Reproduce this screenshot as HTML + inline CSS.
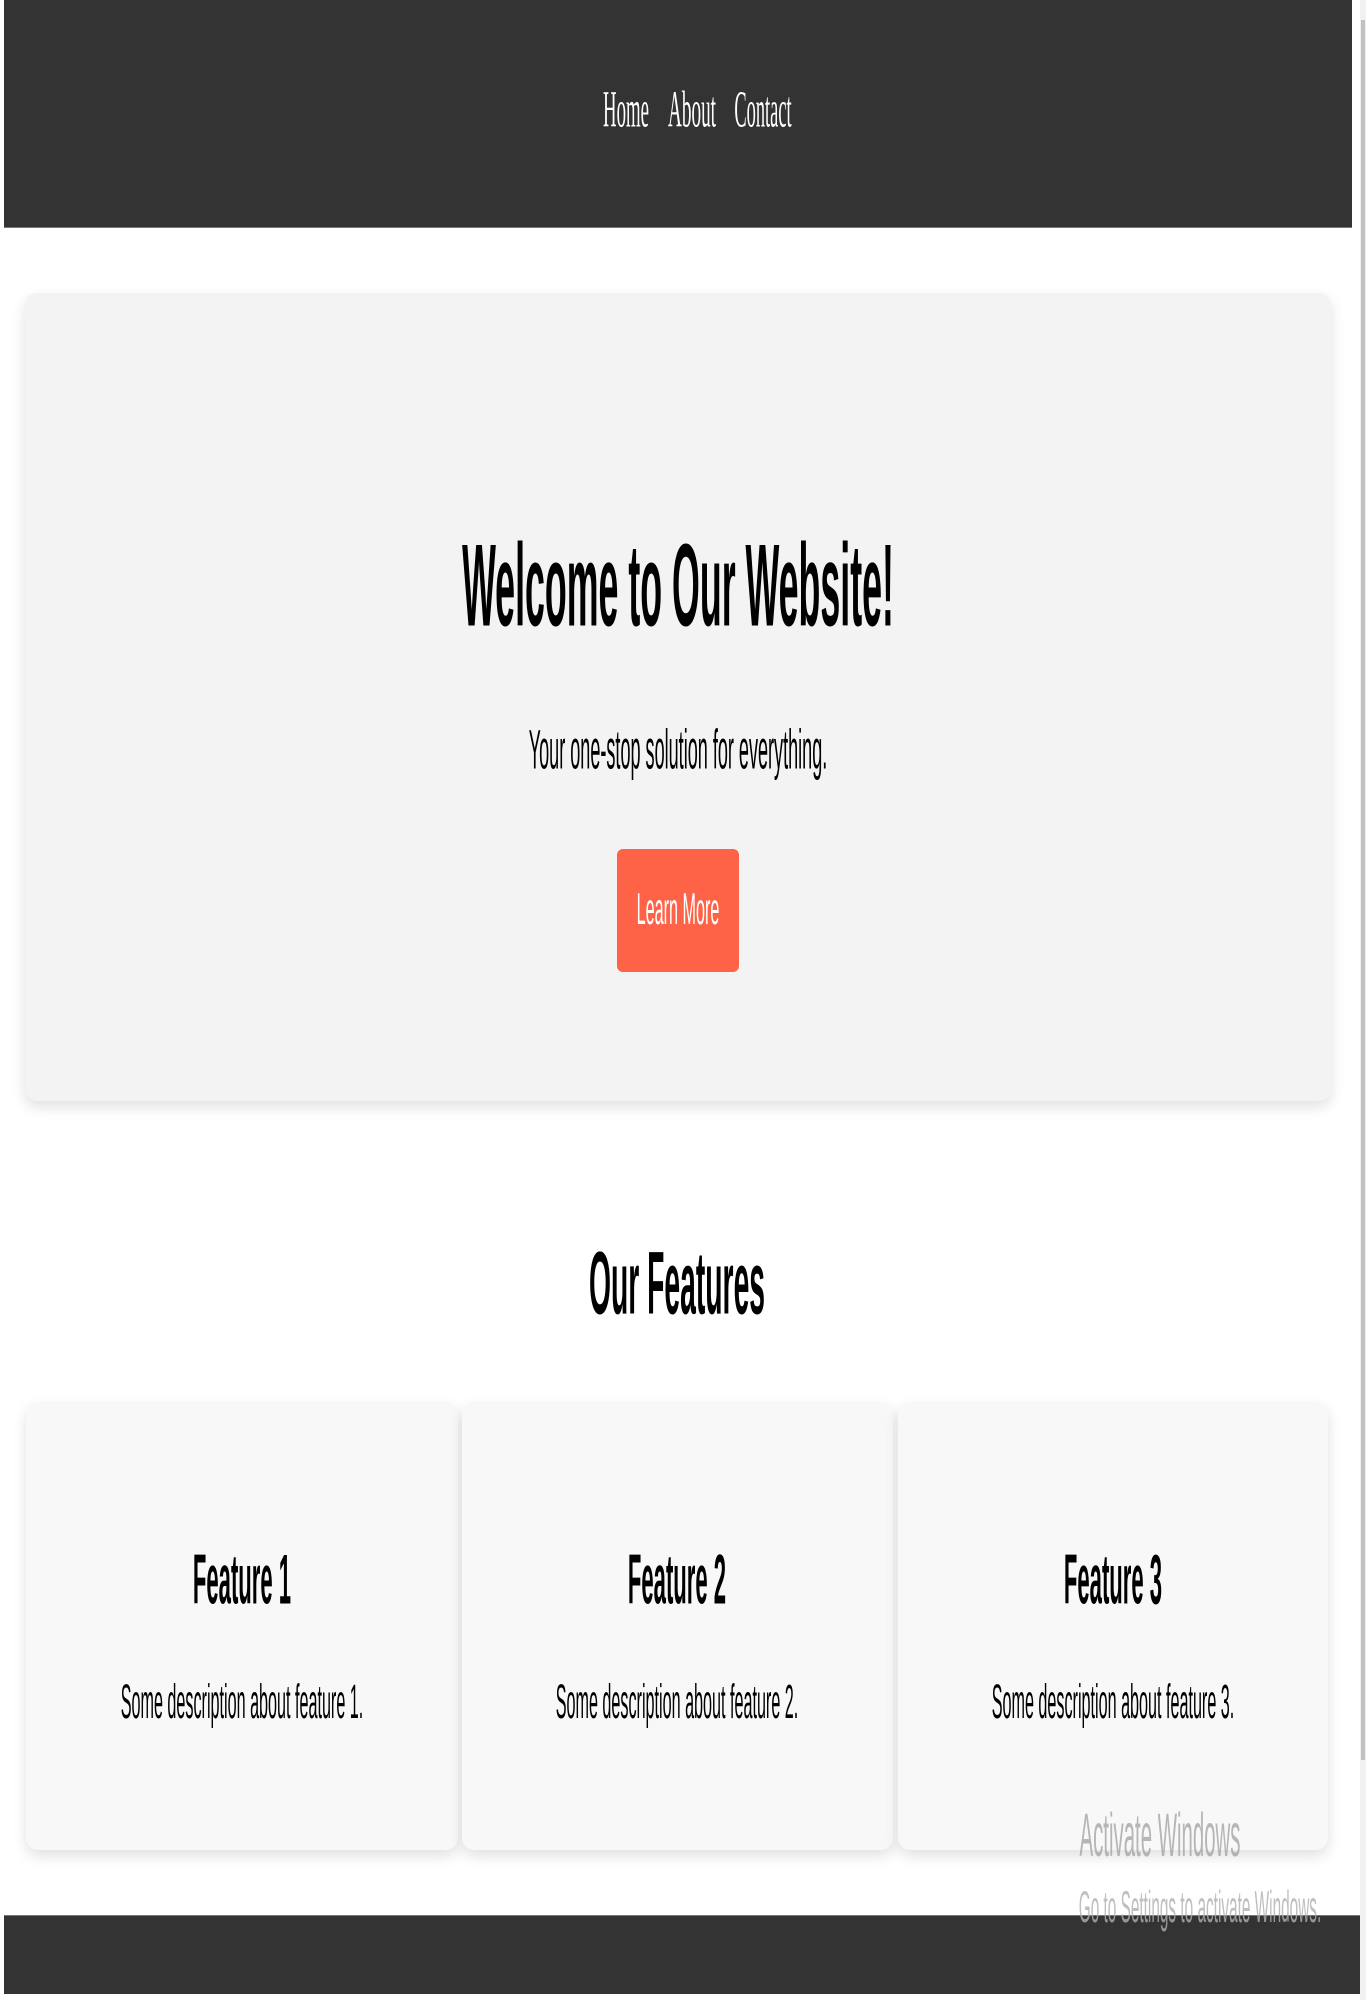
<!DOCTYPE html>
<html><head><meta charset="utf-8">
<style>
html,body{margin:0;padding:0;}
body{width:1366px;height:2000px;position:relative;background:#fff;overflow:hidden;font-family:"Liberation Sans",Arial,sans-serif;}
.t{position:absolute;white-space:nowrap;line-height:1;transform-origin:50% 50%;}
.hdr{position:absolute;left:4px;top:0;width:1348px;height:227px;background:#333;border-bottom:1px solid #777;}
.hero{position:absolute;left:25px;top:293px;width:1306px;height:808px;background:#f3f3f3;border-radius:12px;box-shadow:0 6px 14px rgba(0,0,0,0.12);}
.btn{position:absolute;left:617px;top:849px;width:122px;height:123px;background:#ff6347;border-radius:6px;}
.card{position:absolute;top:1402px;height:448px;background:#f8f8f8;border-radius:12px;box-shadow:0 6px 14px rgba(0,0,0,0.12);}
.ftr{position:absolute;left:4px;top:1915px;width:1356px;height:78px;background:#333;border-top:1px solid #777;}
.sb{position:absolute;left:1360px;top:0;width:6px;height:2000px;background:#f1f1f1;}
.sbt{position:absolute;left:1361px;top:20px;width:4px;height:1740px;background:#c1c1c1;}
</style></head><body>
<div class="hdr"></div>
<div class="sb"></div><div class="sbt"></div>

<span class="t" style="font-family:'Liberation Serif',serif;font-size:20px;color:#fff;left:626px;top:111px;transform:translate(-50%,-50%) scale(0.94,2.57);">Home</span>
<span class="t" style="font-family:'Liberation Serif',serif;font-size:20px;color:#fff;left:692px;top:111px;transform:translate(-50%,-50%) scale(0.96,2.57);">About</span>
<span class="t" style="font-family:'Liberation Serif',serif;font-size:20px;color:#fff;left:763px;top:111px;transform:translate(-50%,-50%) scale(0.92,2.57);">Contact</span>

<div class="hero"></div>
<span class="t" style="font-weight:bold;font-size:48px;color:#000;left:678px;top:589px;transform:translate(-50%,-50%) scale(0.745,2.44);">Welcome to Our Website!</span>
<span class="t" style="font-size:20px;color:#000;left:678px;top:752px;transform:translate(-50%,-50%) scale(0.903,2.79);">Your one-stop solution for everything.</span>
<div class="btn"></div>
<span class="t" style="font-size:16px;color:#fff;left:678px;top:913px;transform:translate(-50%,-50%) scale(1.01,2.79);">Learn More</span>

<span class="t" style="font-weight:bold;font-size:32px;color:#000;left:677px;top:1283px;transform:translate(-50%,-50%) scale(0.884,2.79);">Our Features</span>

<div class="card" style="left:26px;width:432px;"></div>
<div class="card" style="left:462px;width:431px;"></div>
<div class="card" style="left:898px;width:430px;"></div>

<span class="t" style="font-weight:bold;font-size:24px;color:#000;left:242px;top:1583px;transform:translate(-50%,-50%) scale(0.92,2.95);">Feature 1</span>
<span class="t" style="font-weight:bold;font-size:24px;color:#000;left:677px;top:1583px;transform:translate(-50%,-50%) scale(0.92,2.95);">Feature 2</span>
<span class="t" style="font-weight:bold;font-size:24px;color:#000;left:1113px;top:1583px;transform:translate(-50%,-50%) scale(0.92,2.95);">Feature 3</span>

<span class="t" style="font-size:16px;color:#000;left:242px;top:1706px;transform:translate(-50%,-50%) scale(1.01,3.0);">Some description about feature 1.</span>
<span class="t" style="font-size:16px;color:#000;left:677px;top:1706px;transform:translate(-50%,-50%) scale(1.01,3.0);">Some description about feature 2.</span>
<span class="t" style="font-size:16px;color:#000;left:1113px;top:1706px;transform:translate(-50%,-50%) scale(1.01,3.0);">Some description about feature 3.</span>

<div class="ftr"></div>

<span class="t" style="font-size:24px;color:rgba(160,160,160,0.75);left:1160px;top:1838px;transform:translate(-50%,-50%) scale(0.85,2.55);">Activate Windows</span>
<span class="t" style="font-size:16px;color:rgba(175,175,175,0.8);left:1200px;top:1911px;transform:translate(-50%,-50%) scale(0.96,2.8);">Go to Settings to activate Windows.</span>
</body></html>
